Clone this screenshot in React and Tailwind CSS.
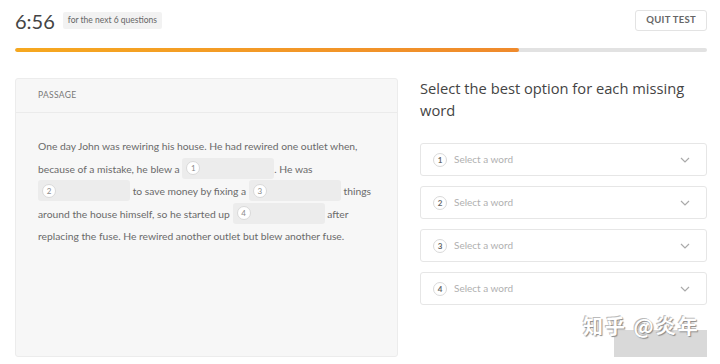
import React from 'react'

const FONT = { fontFamily: 'Lato, "Open Sans", sans-serif' }

function Badge({ n, className = '' }) {
  return (
    <span className={`inline-flex items-center justify-center w-[14px] h-[14px] rounded-full border border-[#d9d9d9] bg-white text-[8px] leading-none text-[#8a8a8a] ${className}`}>
      {n}
    </span>
  )
}

function Blank({ n }) {
  return (
    <span className="inline-flex items-center align-middle w-[92px] h-[21px] rounded-[3px] bg-[#ececec] px-[4px] -mt-[3px]">
      <Badge n={n} />
    </span>
  )
}

function Select({ n }) {
  return (
    <div className="flex items-center h-[33px] rounded-[3px] border border-[#e6e6e6] bg-white pl-[12px] pr-[16px]">
      <Badge n={n} className="text-[#666] font-bold" />
      <span className="ml-[7px] text-[10px] text-[#b0b0b0]">Select a word</span>
      <svg className="ml-auto" width="10" height="6" viewBox="0 0 10 6" fill="none" stroke="#aaa" strokeWidth="1.2">
        <path d="M1 1l4 4 4-4" />
      </svg>
    </div>
  )
}

export default function App() {
  return (
    <div className="relative w-[720px] h-[364px] overflow-hidden bg-white pl-[15px] pr-[13px]" style={FONT}>
      <div className="flex items-center justify-between mt-[10px] h-[21px]">
        <div className="flex items-center gap-[8px]">
          <span className="text-[20px] leading-none text-[#444]">6:56</span>
          <span className="h-[17px] flex items-center px-[5px] rounded-[2px] bg-[#f2f2f2] text-[8.5px] text-[#666]">for the next 6 questions</span>
        </div>
        <button className="h-[21px] px-[10px] rounded-[3px] border border-[#e3e3e3] text-[9.5px] font-bold tracking-[0.3px] text-[#666]">QUIT TEST</button>
      </div>

      <div className="mt-[17px] h-[4px] rounded-full bg-[#e2e2e2] overflow-hidden">
        <div className="h-full rounded-full bg-gradient-to-r from-[#f6a81f] to-[#ef8a2c]" style={{ width: `${(504 / 692) * 100}%` }} />
      </div>

      <div className="mt-[26px] flex gap-[22px]">
        <div className="w-[383px] h-[279px] shrink-0 rounded-[3px] border border-[#ececec] bg-[#f7f7f7]">
          <div className="h-[34px] flex items-center px-[22px] border-b border-[#ebebeb] text-[8.5px] tracking-[0.3px] text-[#777]">PASSAGE</div>
          <p className="pl-[22px] pr-[16px] pt-[22px] text-[10.3px] leading-[22.5px] text-[#6a6a6a]">
            One day John was rewiring his house. He had rewired one outlet when, because of a mistake, he blew a <Blank n={1} />. He was <Blank n={2} /> to save money by fixing a <Blank n={3} /> things around the house himself, so he started up <Blank n={4} /> after replacing the fuse. He rewired another outlet but blew another fuse.
          </p>
        </div>

        <div className="flex-1">
          <h2 className="text-[14.7px] leading-[22px] text-[#444] -mt-[1px]" style={{ fontFamily: '"Open Sans", Lato, sans-serif' }}>
            Select the best option for each missing word
          </h2>
          <div className="mt-[22px] flex flex-col gap-[10px]">
            <Select n={1} />
            <Select n={2} />
            <Select n={3} />
            <Select n={4} />
          </div>
        </div>
      </div>

      <div className="absolute left-[614px] top-[330px] w-[93px] h-[27px] bg-[#d9d9d9]" />
      <div className="absolute left-[583px] top-[316px] text-[20px] leading-none text-white tracking-[2px] font-bold"
        style={{ fontFamily: '"Noto Sans CJK SC", sans-serif', textShadow: '1px 1px 1px #888, -1px -1px 0 #bbb' }}>
        知乎 @炎年
      </div>
    </div>
  )
}
